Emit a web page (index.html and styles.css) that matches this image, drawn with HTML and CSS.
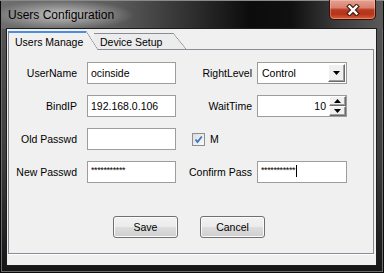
FILE: index.html
```html
<!DOCTYPE html>
<html>
<head>
<meta charset="utf-8">
<title>Users Configuration</title>
<link rel="stylesheet" href="styles.css">
</head>
<body>
<div class="window">
  <div class="titlebar">
    <span class="title">Users Configuration</span>
    <div class="close">
      <svg width="14" height="12" viewBox="0 0 14 12">
        <path d="M3.5 2.5 L10.5 9.5 M10.5 2.5 L3.5 9.5" stroke="#4a1d12" stroke-width="4.6" stroke-linecap="square" fill="none"/>
        <path d="M3.5 2.5 L10.5 9.5 M10.5 2.5 L3.5 9.5" stroke="#ffffff" stroke-width="2.4" stroke-linecap="square" fill="none"/>
      </svg>
    </div>
  </div>
  <div class="client">
    <div class="tabs">
      <div class="tab active">Users Manage</div>
      <div class="tab">Device Setup</div>
    </div>
    <div class="panel">
      <div class="form">
        <label class="lbl">UserName</label>
        <div class="field">ocinside</div>
        <label class="lbl lbl-r">RightLevel</label>
        <div class="field select">
          <span class="val">Control</span>
          <span class="btn3d drop">
            <svg width="7" height="4" viewBox="0 0 7 4"><polygon points="0,0 7,0 3.5,4" fill="#000"/></svg>
          </span>
        </div>

        <label class="lbl">BindIP</label>
        <div class="field">192.168.0.106</div>
        <label class="lbl lbl-r">WaitTime</label>
        <div class="field spin">
          <span class="num">10</span>
          <span class="spinbtns">
            <span class="btn3d half"><svg width="7" height="4" viewBox="0 0 7 4"><polygon points="0,4 7,4 3.5,0" fill="#000"/></svg></span>
            <span class="btn3d half"><svg width="7" height="4" viewBox="0 0 7 4"><polygon points="0,0 7,0 3.5,4" fill="#000"/></svg></span>
          </span>
        </div>

        <label class="lbl">Old Passwd</label>
        <div class="field"></div>
        <div class="check">
          <span class="box">
            <svg width="11" height="11" viewBox="0 0 11 11"><path d="M2.5 5.5 L4.5 8 L8.8 2.5" stroke="#3a74c4" stroke-width="1.8" fill="none"/></svg>
          </span>
          <span>M</span>
        </div>

        <label class="lbl">New Passwd</label>
        <div class="field pw">***********</div>
        <label class="lbl lbl-r">Confirm Pass</label>
        <div class="field pw">***********<span class="caret"></span></div>
      </div>
      <div class="buttons">
        <button class="pbtn">Save</button>
        <button class="pbtn">Cancel</button>
      </div>
    </div>
  </div>
</div>
</body>
</html>
```
FILE: styles.css
```css
html, body {
  margin: 0;
  padding: 0;
  background: #000;
}

body {
  font-family: "Liberation Sans", Arial, sans-serif;
  color: #000;
}

.window {
  width: 384px;
  height: 273px;
  box-sizing: border-box;
  display: flex;
  flex-direction: column;
  background: linear-gradient(to bottom, #5a5a5a 0%, #3c3c3c 60%, #151515 100%);
  box-shadow: inset 0 0 0 1px #0a0a0a, inset 0 0 0 2px #6a6a6a;
}

.titlebar {
  height: 29px;
  flex: none;
  display: flex;
  justify-content: space-between;
  align-items: flex-start;
  background:
    radial-gradient(ellipse 72px 15px at 62px 15px, rgba(225,225,225,0.75), rgba(225,225,225,0) 100%),
    linear-gradient(to right, #6e6e6e 0%, #5c5c5c 30%, #2a2a2a 52%, #0c0c0c 65%, #101010 76%, #3c3c3c 88%, #5a5a5a 100%);
  box-shadow: inset 0 1px 0 #8a8a8a, inset 1px 0 0 #0a0a0a, inset -1px 0 0 #0a0a0a;
}

.title {
  padding: 7px 0 0 8px;
  font-size: 12px;
  line-height: 16px;
  color: #000;
}

.close {
  width: 47px;
  height: 20px;
  margin-right: 8px;
  box-sizing: border-box;
  border: 1px solid #3b0e06;
  border-top: none;
  border-radius: 0 0 5px 5px;
  background: linear-gradient(to bottom, #e6a292 0%, #d88270 40%, #b83a20 52%, #b8341a 75%, #d9603a 100%);
  box-shadow: inset 0 0 0 1px rgba(255,220,210,0.35);
  display: flex;
  align-items: center;
  justify-content: center;
}

.client {
  flex: 1;
  margin: 0 8px 8px 7px;
  padding: 2px 2px 11px 1px;
  background: #f0f0f0;
  box-shadow: 0 0 0 1px #1c1c1c;
  display: flex;
  flex-direction: column;
}

.tabs {
  display: flex;
  align-items: flex-end;
  height: 18px;
  flex: none;
}

.tab {
  position: relative;
  box-sizing: border-box;
  font-size: 10.5px;
  line-height: 14px;
  white-space: nowrap;
  background: #f0f0f0;
  border-top: 1px solid #898c95;
}

.tab.active {
  width: 78px;
  height: 19px;
  margin-bottom: -1px;
  padding: 2px 0 0 6px;
  border-left: 1px solid #898c95;
  border-top: 2px solid #4a8fd8;
  z-index: 2;
}

.tab.active::after {
  content: "";
  position: absolute;
  top: -2px;
  right: -12px;
  width: 12px;
  bottom: 0;
  background: linear-gradient(to bottom left, transparent calc(50% - 0.6px), #898c95 50%, #f0f0f0 calc(50% + 0.6px));
}

.tab:not(.active) {
  width: 79px;
  height: 16px;
  margin-left: 8px;
  padding: 1px 0 0 6px;
  background: #ececec;
  z-index: 1;
}

.tab:not(.active)::after {
  content: "";
  position: absolute;
  top: -1px;
  right: -13px;
  width: 13px;
  bottom: 0;
  background: linear-gradient(to bottom left, transparent calc(50% - 0.6px), #898c95 50%, #ececec calc(50% + 0.6px));
}

.panel {
  flex: 1;
  border: 1px solid #898c95;
  background: #f0f0f0;
  padding-top: 12px;
  display: flex;
  flex-direction: column;
  box-shadow: 0 1px 0 #ffffff;
}

.form {
  display: grid;
  grid-template-columns: 78px 89px 81px 90px;
  grid-auto-rows: 22px;
  row-gap: 11px;
  font-size: 10.5px;
}

.lbl {
  text-align: right;
  padding-right: 10px;
  line-height: 22px;
  white-space: nowrap;
}

.lbl-r {
  padding-right: 5px;
}

.field {
  box-sizing: border-box;
  border: 1px solid #9d9d9d;
  background: #fff;
  padding-left: 3px;
  line-height: 20px;
  white-space: nowrap;
  display: flex;
  align-items: center;
}

.field.pw {
  font-size: 9px;
  line-height: 14px;
  align-items: flex-start;
  padding-top: 1px;
  letter-spacing: -0.4px;
}

.caret {
  display: inline-block;
  width: 1px;
  height: 12px;
  background: #000;
  margin: 2px 0 0 1px;
}

.select {
  justify-content: space-between;
  padding-left: 4px;
}

.btn3d {
  box-sizing: border-box;
  background: #f0f0f0;
  border: 1px solid;
  border-color: #ffffff #6a6a6a #6a6a6a #ffffff;
  box-shadow: 1px 1px 0 #404040 inset, -1px -1px 0 #a0a0a0 inset;
  display: flex;
  align-items: center;
  justify-content: center;
}

.drop {
  width: 17px;
  height: 18px;
  margin-right: 1px;
  box-shadow: inset -1px -1px 0 #a0a0a0;
}

.spin {
  justify-content: flex-end;
}

.num {
  margin-right: 3px;
}

.spinbtns {
  display: flex;
  flex-direction: column;
  width: 17px;
  height: 20px;
}

.btn3d.half {
  flex: 1;
  box-shadow: inset -1px -1px 0 #a0a0a0;
}

.check {
  grid-column: 3 / span 2;
  display: flex;
  align-items: center;
  gap: 5px;
  padding-left: 16px;
}

.check .box {
  width: 13px;
  height: 13px;
  box-sizing: border-box;
  border: 1px solid #8e8f8f;
  background: linear-gradient(135deg, #dcdcdc, #fbfbfb);
  display: flex;
  align-items: center;
  justify-content: center;
}

.buttons {
  display: flex;
  gap: 22px;
  padding-left: 104px;
  margin-top: 33px;
}

.pbtn {
  width: 65px;
  height: 22px;
  box-sizing: border-box;
  border: 1px solid #707070;
  border-radius: 3px;
  background: linear-gradient(to bottom, #f2f2f2 0%, #ebebeb 50%, #dddddd 51%, #cfcfcf 100%);
  box-shadow: inset 0 0 0 1px #fbfbfb;
  font-family: "Liberation Sans", Arial, sans-serif;
  font-size: 10.5px;
  color: #000;
  padding: 0;
}
```
